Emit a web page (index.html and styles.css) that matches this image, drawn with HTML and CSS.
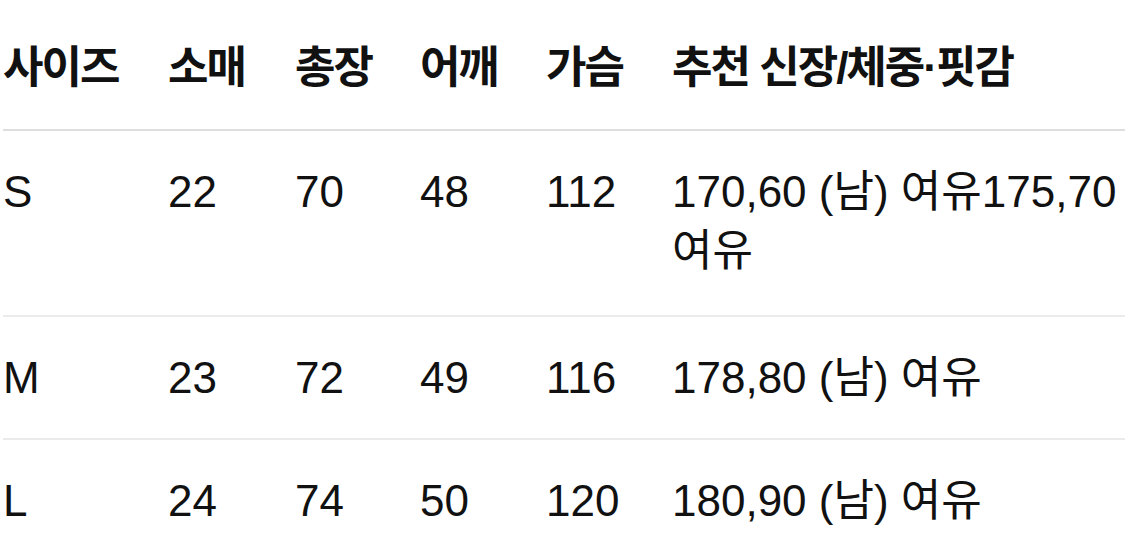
FILE: index.html
```html
<!DOCTYPE html>
<html lang="ko">
<head>
<meta charset="utf-8">
<title>사이즈 표</title>
<link rel="stylesheet" href="styles.css">
</head>
<body>
<table class="size-table">
  <colgroup>
    <col class="c1"><col class="c2"><col class="c3"><col class="c4"><col class="c5"><col class="c6">
  </colgroup>
  <thead>
    <tr>
      <th>사이즈</th>
      <th>소매</th>
      <th>총장</th>
      <th>어깨</th>
      <th>가슴</th>
      <th>추천 신장/체중·핏감</th>
    </tr>
  </thead>
  <tbody>
    <tr class="two-line">
      <td>S</td>
      <td>22</td>
      <td>70</td>
      <td>48</td>
      <td>112</td>
      <td>170,60 (남) 여유175,70 여유</td>
    </tr>
    <tr>
      <td>M</td>
      <td>23</td>
      <td>72</td>
      <td>49</td>
      <td>116</td>
      <td>178,80 (남) 여유</td>
    </tr>
    <tr>
      <td>L</td>
      <td>24</td>
      <td>74</td>
      <td>50</td>
      <td>120</td>
      <td>180,90 (남) 여유</td>
    </tr>
  </tbody>
</table>
</body>
</html>
```
FILE: styles.css
```css
html, body {
  margin: 0;
  padding: 0;
  background: #ffffff;
}

body {
  padding: 7px 0 0 3px;
  font-family: "Liberation Sans", Arial, "Noto Sans CJK KR", sans-serif;
  color: #111111;
  overflow: hidden;
}

.size-table {
  width: 1122px;
  border-collapse: collapse;
  table-layout: fixed;
  font-size: 44px;
  line-height: 59px;
}

.c1 { width: 165px; }
.c2 { width: 127px; }
.c3 { width: 125px; }
.c4 { width: 126px; }
.c5 { width: 126px; }

.size-table th,
.size-table td {
  text-align: left;
  vertical-align: top;
  padding: 31px 0 31px 0;
  border-bottom: 2px solid #ebebeb;
}

.size-table th {
  font-weight: 700;
  padding-bottom: 32px;
  border-bottom-color: #dedede;
  letter-spacing: -2px;
}

.size-table tbody tr:last-child td {
  border-bottom: none;
}

.two-line td {
  padding-bottom: 35px;
}
```
